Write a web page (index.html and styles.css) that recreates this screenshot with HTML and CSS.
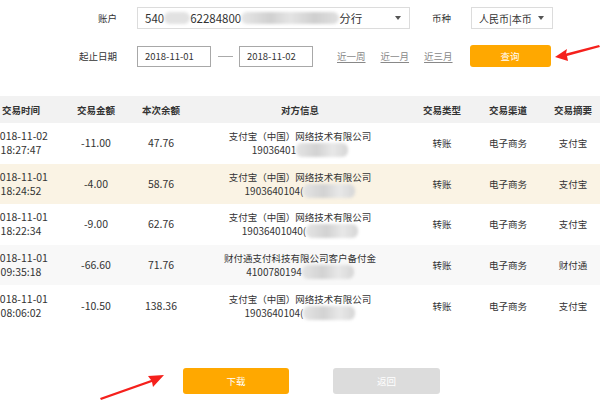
FILE: index.html
```html
<!DOCTYPE html>
<html>
<head>
<meta charset="utf-8">
<link rel="stylesheet" href="styles.css">
</head>
<body>
<div class="page">
  <div class="form">
    <div class="frow r1">
      <span class="label">账户</span>
      <div class="select acct">
        <span class="val">540<i class="blur b1"></i>62284800<i class="blur b2"></i>分行</span>
        <span class="caret"></span>
      </div>
      <span class="label2">币种</span>
      <div class="select cur">
        <span class="val">人民币|本币</span>
        <span class="caret"></span>
      </div>
    </div>
    <div class="frow r2">
      <span class="label">起止日期</span>
      <div class="date">2018-11-01</div>
      <span class="dash"></span>
      <div class="date">2018-11-02</div>
      <div class="links">
        <a>近一周</a><a>近一月</a><a>近三月</a>
      </div>
      <button class="btn query">查询</button>
    </div>
  </div>

  <div class="tablewrap">
    <div class="table">
      <div class="tr head">
        <div>交易时间</div><div>交易金额</div><div>本次余额</div><div>对方信息</div><div>交易类型</div><div>交易渠道</div><div>交易摘要</div>
      </div>
      <div class="tr">
        <div>2018-11-02<br>18:27:47</div><div>-11.00</div><div>47.76</div>
        <div class="cn">支付宝（中国）网络技术有限公司<br><span class="acc">19036401<i class="blur b3"></i></span></div>
        <div class="cn">转账</div><div class="cn">电子商务</div><div class="cn">支付宝</div>
      </div>
      <div class="tr cream">
        <div>2018-11-01<br>18:24:52</div><div>-4.00</div><div>58.76</div>
        <div class="cn">支付宝（中国）网络技术有限公司<br><span class="acc">1903640104(<i class="blur b3"></i></span></div>
        <div class="cn">转账</div><div class="cn">电子商务</div><div class="cn">支付宝</div>
      </div>
      <div class="tr">
        <div>2018-11-01<br>18:22:34</div><div>-9.00</div><div>62.76</div>
        <div class="cn">支付宝（中国）网络技术有限公司<br><span class="acc">19036401040(<i class="blur b3"></i></span></div>
        <div class="cn">转账</div><div class="cn">电子商务</div><div class="cn">支付宝</div>
      </div>
      <div class="tr grey">
        <div>2018-11-01<br>09:35:18</div><div>-66.60</div><div>71.76</div>
        <div class="cn">财付通支付科技有限公司客户备付金<br><span class="acc">4100780194<i class="blur b3"></i></span></div>
        <div class="cn">转账</div><div class="cn">电子商务</div><div class="cn">财付通</div>
      </div>
      <div class="tr">
        <div>2018-11-01<br>08:06:02</div><div>-10.50</div><div>138.36</div>
        <div class="cn">支付宝（中国）网络技术有限公司<br><span class="acc">1903640104(<i class="blur b3"></i></span></div>
        <div class="cn">转账</div><div class="cn">电子商务</div><div class="cn">支付宝</div>
      </div>
    </div>
  </div>

  <div class="actions">
    <button class="btn big dl">下载</button>
    <button class="btn big back">返回</button>
  </div>

  <svg class="arrow a1" width="50" height="20" viewBox="0 0 50 20">
    <polygon points="2,13 14,5 13,9.5 46,1 47,3 14,12 15,17" fill="#f5201c"/>
  </svg>
  <svg class="arrow a2" width="70" height="30" viewBox="0 0 70 30">
    <polygon points="66,3 50,4 53,8 2,26 3,28 54,10 55,15" fill="#f5201c"/>
  </svg>
</div>
</body>
</html>
```

FILE: styles.css
```css
* { box-sizing: border-box; }
html, body { margin: 0; padding: 0; background: #fff; }
body {
  font-family: "Noto Sans CJK SC", "Liberation Sans", sans-serif;
  color: #333;
  width: 600px;
  height: 400px;
  overflow: hidden;
}
.page { position: relative; width: 600px; height: 400px; }

.form { padding-top: 7px; }
.frow { display: flex; align-items: center; }
.r1 { height: 22px; }
.r2 { height: 22px; margin-top: 16px; }
.label {
  width: 117px;
  text-align: right;
  font-size: 9.5px;
  color: #333;
  margin-right: 20px;
}
.label2 { font-size: 9.5px; margin-left: 22px; margin-right: 20px; }
.select {
  height: 22px;
  border: 1px solid #dcdcdc;
  display: flex;
  align-items: center;
  justify-content: space-between;
  padding: 0 8px 0 7px;
  font-size: 11.5px;
  color: #333;
}
.acct { width: 273px; }
.cur { width: 82px; font-size: 10px; }
.val { display: flex; align-items: center; white-space: nowrap; }
.caret {
  width: 0; height: 0;
  border-left: 3.5px solid transparent;
  border-right: 3.5px solid transparent;
  border-top: 4px solid #555;
}
.blur {
  display: inline-block;
  height: 12px;
  background: #d8d8d8;
  border-radius: 6px;
  filter: blur(1.5px);
}
.b1 { width: 26px; background: #e2e2e2; }
.b2 { width: 98px; background: linear-gradient(90deg, #e6e6e6, #d0d0d0 30%, #e4e4e4 50%, #cfcfcf 75%, #e0e0e0); }
.b3 { width: 52px; height: 14px; vertical-align: middle; background: linear-gradient(90deg, #e4e4e4, #d2d2d2 40%, #e8e8e8 70%, #d6d6d6); }

.date {
  width: 74px;
  height: 21px;
  border: 1px solid #a8a8a8;
  font-size: 9.5px;
  line-height: 19px;
  padding-left: 7px;
  color: #333;
}
.dash { width: 15px; height: 1px; background: #aaa; margin: 0 6px 0 7px; }
.links { display: flex; gap: 15px; margin-left: 24px; }
.links a {
  font-size: 9.5px;
  color: #888;
  text-decoration: underline;
  text-underline-offset: 2px;
}
.btn {
  border: 0;
  border-radius: 3px;
  font-family: inherit;
  color: #fff;
  padding: 0;
}
.query {
  margin-left: 17px;
  width: 81px;
  height: 22px;
  background: #ffa800;
  font-size: 9.5px;
}

.tablewrap { margin-top: 29px; width: 600px; overflow: hidden; }
.table { margin-left: -16px; width: 618px; }
.tr {
  display: grid;
  grid-template-columns: 74px 76px 54px 224px 60px 72px 58px;
  align-items: center;
  height: 40.6px;
  font-size: 10.5px;
  line-height: 14px;
  text-align: center;
  color: #333;
}
.tr > div { white-space: nowrap; }
.tr > .cn { font-size: 9.5px; }
.tr.head {
  height: 27px;
  background: #f2f2f2;
  font-weight: bold;
  font-size: 9.5px;
}
.tr.cream { background: #faf3e4; }
.tr.grey { background: #f8f8f8; }
.acc { display: inline-flex; align-items: center; font-size: 10px; }

.actions {
  margin-top: 42px;
  display: flex;
  padding-left: 183px;
  gap: 44px;
}
.big { width: 106px; height: 26px; font-size: 9.5px; }
.dl { background: #ffa800; }
.back { background: #dcdcdc; width: 107px; }

.arrow { position: absolute; }
.a1 { left: 553px; top: 44px; }
.a2 { left: 98px; top: 372px; }
```
